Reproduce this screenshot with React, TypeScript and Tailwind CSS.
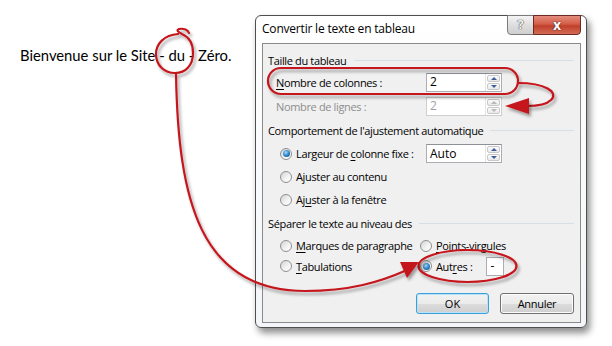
import React from 'react';

const font = "font-['Open_Sans',sans-serif]";

function Spinner({ disabled }: { disabled?: boolean }) {
  return (
    <div className="flex h-full w-[16px] flex-col gap-px border-l border-[#e3e3e3] p-px">
      <div className="flex flex-1 items-center justify-center rounded-[2px] border border-[#c8c8c8] bg-[linear-gradient(#fbfbfb,#e9e9e9)]">
        <div className={`h-0 w-0 border-x-[3px] border-b-[3px] border-x-transparent ${disabled ? 'border-b-[#b8b8b8]' : 'border-b-[#3c5f98]'}`} />
      </div>
      <div className="flex flex-1 items-center justify-center rounded-[2px] border border-[#c8c8c8] bg-[linear-gradient(#fbfbfb,#e9e9e9)]">
        <div className={`h-0 w-0 border-x-[3px] border-t-[3px] border-x-transparent ${disabled ? 'border-t-[#b8b8b8]' : 'border-t-[#3c5f98]'}`} />
      </div>
    </div>
  );
}

function NumField({ value, disabled }: { value: string; disabled?: boolean }) {
  return (
    <div
      className={`flex h-[19px] w-[76px] items-center border bg-white ${
        disabled ? 'border-[#cfcfcf] text-[#a0a0a0]' : 'border-[#abadb3] border-t-[#8e9297] text-black'
      }`}
    >
      <span className="flex-1 pl-[3px] text-[12px] leading-none">{value}</span>
      <Spinner disabled={disabled} />
    </div>
  );
}

function Radio({ checked }: { checked?: boolean }) {
  return (
    <div className="flex h-[12px] w-[12px] shrink-0 items-center justify-center rounded-full border border-[#8e8f8f] bg-[linear-gradient(135deg,#d4d4d4,#f4f4f4_60%,#ffffff)]">
      {checked && (
        <div className="h-[7px] w-[7px] rounded-full bg-[radial-gradient(circle_at_40%_35%,#9fdcff,#2a7cc0_55%,#0e3f74)]" />
      )}
    </div>
  );
}

// dialog text, Segoe-ish metrics
const t = 'whitespace-nowrap text-[11px] leading-none tracking-[-0.35px]';

function Heading({ children }: { children: React.ReactNode }) {
  return (
    <div className="flex items-center pl-[5px] pr-[6px]">
      <span className={t}>{children}</span>
      <div className="ml-[7px] h-px flex-1 bg-[#d5dfe5]" />
    </div>
  );
}

function U({ children }: { children: React.ReactNode }) {
  return <span className="underline decoration-1 underline-offset-[2px]">{children}</span>;
}

function RadioLabel({ checked, children }: { checked?: boolean; children: React.ReactNode }) {
  return (
    <div className="flex items-center gap-[4px]">
      <Radio checked={checked} />
      <span className={t}>{children}</span>
    </div>
  );
}

function Dialog() {
  return (
    <div className="flex h-[313px] w-[332px] flex-col rounded-[6px] border border-[#4f4f4f] bg-[linear-gradient(#ffffff,#f3f5f8)] shadow-[3px_5px_7px_rgba(0,0,0,0.45)]">
      {/* Title bar */}
      <div className="flex h-[27px] items-start justify-between pl-[6px] pr-[5px]">
        <span className="mt-[7px] text-[12px] leading-none tracking-[-0.2px] text-black">Convertir le texte en tableau</span>
        <div className="-mt-px flex">
          <div className="flex h-[20px] w-[27px] items-center justify-center rounded-bl-[4px] border border-[#7b7b7b] bg-[linear-gradient(#f4f4f4,#dedede_50%,#cfcfcf)] text-[13px] font-bold text-[#f4f4f4] [text-shadow:0_0_1px_#333,0_0_1px_#333]">
            ?
          </div>
          <div className="-ml-px flex h-[20px] w-[48px] items-center justify-center rounded-br-[4px] border border-[#6b2a22] bg-[linear-gradient(#e48d7e,#d35d48_45%,#c0402b_55%,#d26b55)] text-[14px] font-bold leading-none text-white [text-shadow:0_0_1px_#3a1410,0_0_1px_#3a1410]">
            x
          </div>
        </div>
      </div>

      {/* Client area */}
      <div className="mb-[4px] ml-[6px] mr-[5px] flex flex-1 flex-col border border-[#8a8a8a] bg-[#f0f0f0] text-black">
        <div className="mt-[6px] flex h-[20px] flex-col justify-center">
          <Heading>Taille du tableau</Heading>
        </div>
        <div className="flex h-[24px] items-center pl-[13px]">
          <span className={`w-[150px] ${t}`}>
            <U>N</U>ombre de colonnes :
          </span>
          <NumField value="2" />
        </div>
        <div className="flex h-[24px] items-center pl-[13px]">
          <span className={`w-[150px] text-[#8d8d8d] ${t}`}>Nombre de lignes :</span>
          <NumField value="2" disabled />
        </div>
        <div className="flex h-[24px] flex-col justify-center">
          <Heading>Comportement de l'ajustement automatique</Heading>
        </div>
        <div className="flex h-[23px] items-center pl-[17px]">
          <div className="w-[146px]">
            <RadioLabel checked>
              Largeur de <U>c</U>olonne fixe :
            </RadioLabel>
          </div>
          <NumField value="Auto" />
        </div>
        <div className="flex h-[23px] items-center pl-[17px]">
          <RadioLabel>
            A<U>j</U>uster au contenu
          </RadioLabel>
        </div>
        <div className="flex h-[23px] items-center pl-[17px]">
          <RadioLabel>
            Aj<U>u</U>ster à la fenêtre
          </RadioLabel>
        </div>
        <div className="flex h-[25px] flex-col justify-center">
          <Heading>Séparer le texte au niveau des</Heading>
        </div>
        <div className="flex h-[19px] items-center pl-[17px]">
          <div className="w-[140px]">
            <RadioLabel>
              <U>M</U>arques de paragraphe
            </RadioLabel>
          </div>
          <RadioLabel>
            <U>P</U>oints-virgules
          </RadioLabel>
        </div>
        <div className="flex h-[22px] items-center pl-[17px]">
          <div className="w-[140px]">
            <RadioLabel>
              <U>T</U>abulations
            </RadioLabel>
          </div>
          <RadioLabel checked>
            Aut<U>r</U>es :
          </RadioLabel>
          <div className="ml-[13px] flex h-[19px] w-[18px] items-center border border-[#abadb3] bg-white pl-[4px] text-[12px] leading-none">
            -
          </div>
        </div>
        <div className="mt-[16px] flex justify-end gap-[11px] pr-[6px]">
          <button className="flex h-[21px] w-[73px] items-center justify-center rounded-[3px] border border-[#3c9fd8] bg-[linear-gradient(#f2f2f2,#ebebeb_50%,#dddddd_50%,#cfcfcf)] text-[11px] leading-none shadow-[inset_0_0_0_1px_#b9e3f9]">
            OK
          </button>
          <button className="flex h-[21px] w-[74px] items-center justify-center rounded-[3px] border border-[#707070] bg-[linear-gradient(#f2f2f2,#ebebeb_50%,#dddddd_50%,#cfcfcf)] text-[11px] leading-none tracking-[-0.3px] shadow-[inset_0_0_0_1px_#fcfcfc]">
            Annuler
          </button>
        </div>
      </div>
    </div>
  );
}

function Annotations() {
  return (
    <svg className="pointer-events-none absolute inset-0" width="612" height="346" viewBox="0 0 612 346">
      <defs>
        <filter id="sh" x="-20%" y="-20%" width="140%" height="140%">
          <feDropShadow dx="2" dy="3" stdDeviation="1.5" floodColor="#000" floodOpacity="0.35" />
        </filter>
      </defs>
      <g filter="url(#sh)" stroke="#c4161c" strokeWidth="2.2" fill="none" strokeLinecap="round">
        <path d="M178,34 C164,35 156,44 156,54 C156,66 165,73 175,73 C186,73 193,65 193,53 C193,44 189,37 182,34 C178,32 176,30 179,29 C184,28 188,30 189,33" />
        <path d="M176,73 C178,200 200,291 305,291 C350,291 380,282 407,270" />
        <rect x="268" y="68" width="250" height="26" rx="13" />
        <path d="M518,83 C545,83 559,92 551,100 C546,105 536,106 527,106" />
        <ellipse cx="467.5" cy="266" rx="49" ry="16" />
      </g>
      <g filter="url(#sh)" fill="#c4161c">
        <polygon points="419,262 400,262 407,278" />
        <polygon points="505,106 529,98 529,114" />
      </g>
    </svg>
  );
}

export default function App() {
  return (
    <div className={`relative h-[346px] w-[612px] overflow-hidden bg-white ${font}`}>
      <div className="flex pt-[15px]">
        <div className="w-[255px] pl-[20px] pt-[31px] font-['Lato',sans-serif] text-[14.8px] leading-[18px] text-black">
          Bienvenue sur le Site - du - Zéro.
        </div>
        <Dialog />
      </div>
      <Annotations />
    </div>
  );
}
